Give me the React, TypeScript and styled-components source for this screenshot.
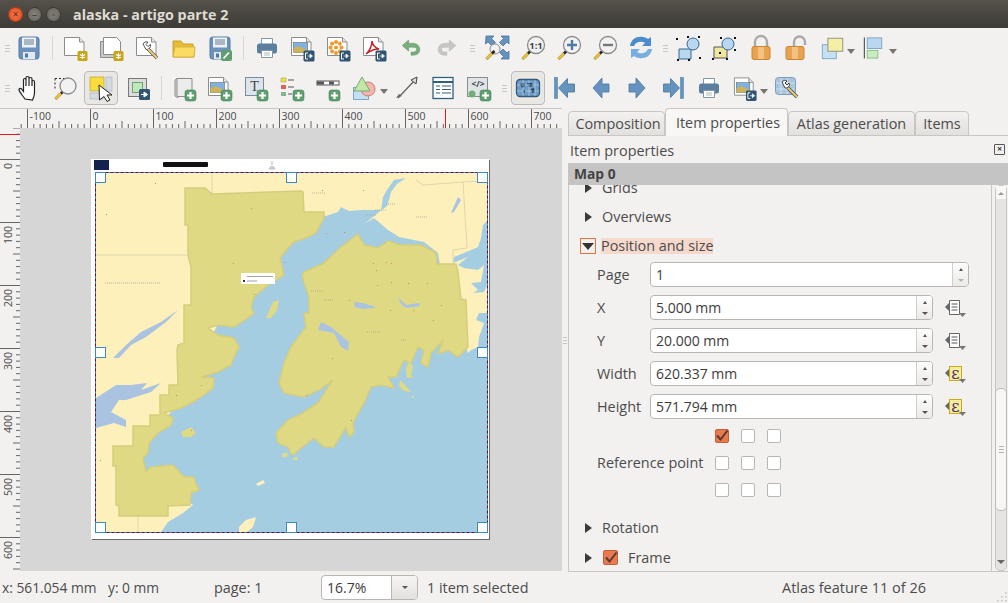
import React from 'react';
import styled, { createGlobalStyle } from 'styled-components';

const GlobalStyle = createGlobalStyle`
  html, body {
    margin: 0;
    width: 1008px;
    height: 603px;
    overflow: hidden;
    background: #f2f1f0;
    font-family: "Open Sans", "Noto Sans", sans-serif;
    font-size: 14.4px;
    color: #4c4c4c;
  }
`;

const Window = styled.div`
  display: flex;
  flex-direction: column;
  width: 1008px;
  height: 603px;
`;

const TitleBar = styled.div`
  display: flex;
  align-items: center;
  height: 28px;
  padding-left: 8px;
  background: linear-gradient(#55524b, #3d3b36);
  color: #dfdbd2;
  font-weight: 700;
  font-size: 14.300px;
`;

const WinButton = styled.div<{ $close?: boolean }>`
  width: 15px;
  height: 15px;
  margin-right: 4px;
  border-radius: 50%;
  border: 1px solid ${(p) => (p.$close ? '#b13d18' : '#3a3833')};
  box-sizing: border-box;
  background: ${(p) => (p.$close ? 'radial-gradient(#f47a4a, #e0491c)' : 'radial-gradient(#85827a, #65625b)')};
  color: ${(p) => (p.$close ? '#5c2210' : '#38362f')};
  font-size: 10px;
  line-height: 12px;
  text-align: center;
  font-weight: 400;
`;

const WinTitle = styled.div`
  margin-left: 8px;
`;

const ToolBar = styled.div`
  display: flex;
  align-items: center;
  height: 40px;
  padding-left: 3px;
`;

const Grip = styled.div<{ $w: number }>`
  width: ${(p) => p.$w}px;
  display: flex;
  flex-direction: column;
  align-items: center;
  gap: 2px;
  i {
    width: 5px;
    height: 1px;
    background: #c9c7c3;
  }
`;

const Separator = styled.div<{ $w: number }>`
  width: ${(p) => p.$w}px;
  display: flex;
  justify-content: center;
  &::after {
    content: '';
    width: 1px;
    height: 24px;
    background: #d9d7d3;
  }
`;

const ToolButton = styled.div<{ $w?: number; $active?: boolean }>`
  width: ${(p) => (p.$active ? 34 : p.$w || 36)}px;
  height: 34px;
  margin-right: ${(p) => (p.$active ? 2 : 0)}px;
  box-sizing: border-box;
  display: flex;
  align-items: center;
  justify-content: ${(p) => (p.$w ? 'flex-start' : 'center')};
  padding-left: ${(p) => (p.$w ? 4 : 0)}px;
  border-radius: 4px;
  border: 1px solid ${(p) => (p.$active ? '#bdbbb7' : 'transparent')};
  background: ${(p) => (p.$active ? '#e9e7e4' : 'transparent')};
`;

const MenuArrow = styled.span`
  width: 0;
  height: 0;
  margin: 6px 0 0 1px;
  border-left: 4px solid transparent;
  border-right: 4px solid transparent;
  border-top: 5px solid #77756f;
`;

const Main = styled.div`
  display: flex;
  height: 464px;
`;

const Workspace = styled.div`
  display: grid;
  grid-template-columns: 20px 1fr;
  grid-template-rows: 19px 1fr;
  width: 562px;
  height: 463px;
  box-sizing: border-box;
  border-top: 1px solid #c8c6c2;
  border-bottom: 1px solid #c8c6c2;
  border-right: 1px solid #c8c6c2;
`;

const RulerCorner = styled.div`
  background: #f2f1f0;
`;

const RulerSvg = styled.svg`
  display: block;
  background: #f2f1f0;
`;

const Canvas = styled.div`
  background: #d6d6d6;
  padding: 31px 0 0 71px;
  overflow: hidden;
`;

const Page = styled.div`
  position: relative;
  width: 398px;
  height: 380px;
  box-sizing: border-box;
  padding: 13px 2px 0 3.5px;
  background: #fff;
  box-shadow: 1px 1px 0 #6a6a6a;
`;

const PageHeader = styled.svg`
  position: absolute;
  left: 0;
  top: 0;
`;

const MapBox = styled.div`
  position: relative;
  width: 393px;
  height: 361px;
`;

const Handle = styled.div<{ $h: 'l' | 'm' | 'r'; $v: 't' | 'm' | 'b' }>`
  position: absolute;
  width: 11px;
  height: 11px;
  box-sizing: border-box;
  border: 1.500px solid #3f88c5;
  background: #fff;
  left: ${(p) => ({ l: '0', m: '191px', r: '382px' }[p.$h])};
  top: ${(p) => ({ t: '0', m: '175px', b: '350px' }[p.$v])};
`;

const Splitter = styled.div`
  width: 6px;
  display: flex;
  flex-direction: column;
  align-items: center;
  justify-content: center;
  gap: 2px;
  i {
    width: 4px;
    height: 1px;
    background: #c9c7c3;
  }
`;

const Panel = styled.div`
  display: flex;
  flex-direction: column;
  width: 440px;
`;

const TabRow = styled.div`
  display: flex;
  align-items: flex-end;
  height: 27px;
  border-bottom: 1px solid #c8c6c2;
`;

const Tab = styled.div<{ $active?: boolean; $w: number; $indent?: number }>`
  width: ${(p) => p.$w}px;
  height: ${(p) => (p.$active ? 28 : 25)}px;
  margin-bottom: -1px;
  padding-left: ${(p) => p.$indent || 0}px;
  box-sizing: border-box;
  border: 1px solid #c8c6c2;
  border-bottom: ${(p) => (p.$active ? 'none' : '1px solid #c8c6c2')};
  border-radius: 4px 4px 0 0;
  background: ${(p) => (p.$active ? '#f8f7f6' : 'linear-gradient(#f2f1f0, #e2e0dd)')};
  text-align: center;
  line-height: ${(p) => (p.$active ? 27 : 23)}px;
`;

const DockTitle = styled.div`
  display: flex;
  align-items: center;
  justify-content: space-between;
  height: 27px;
  box-sizing: border-box;
  padding: 2px 3px 0 2px;
`;

const DockClose = styled.div`
  width: 9px;
  height: 9px;
  margin-top: -3px;
  border: 1px solid #555;
  border-radius: 1px;
  color: #333;
  font-size: 9px;
  line-height: 8px;
  text-align: center;
  font-weight: 700;
`;

const MapBar = styled.div`
  height: 22px;
  line-height: 22px;
  padding-left: 6px;
  background: #c4c4c4;
  font-weight: 700;
  font-size: 13.800px;
  color: #444;
`;

const ScrollWrap = styled.div`
  display: flex;
  flex: 1;
  min-height: 0;
  border-left: 1px solid #c8c6c2;
  border-bottom: 1px solid #c8c6c2;
`;

const ScrollContent = styled.div`
  width: 423px;
  overflow: hidden;
  border-right: 1px solid #c8c6c2;
  padding-left: 16px;
  box-sizing: border-box;
`;

const ScrollInner = styled.div`
  margin-top: -12px;
`;

const Scrollbar = styled.div`
  position: relative;
  width: 12px;
  margin-left: 3px;
  border: 1px solid #c8c6c2;
  border-radius: 5px;
  box-sizing: border-box;
  background: #e6e4e2;
  display: flex;
  flex-direction: column;
  justify-content: space-between;
  align-items: center;
  padding: 6px 0;
`;

const ScrollCap = styled.div`
  position: absolute;
  left: 0;
  right: 0;
  top: 0;
  height: 13px;
  background: #f8f7f6;
`;

const ScrollThumb = styled.div`
  position: absolute;
  left: -1px;
  right: -1px;
  top: 202px;
  height: 123px;
  box-sizing: border-box;
  background: #f7f6f5;
  border: 1px solid #bdbbb7;
  border-radius: 5px;
  display: flex;
  align-items: center;
  justify-content: center;
  flex-direction: column;
  gap: 2px;
  i {
    width: 5px;
    height: 1px;
    background: #b5b3af;
  }
`;

const ScrollUp = styled.span`
  position: relative;
  border-left: 3px solid transparent;
  border-right: 3px solid transparent;
  border-bottom: 3px solid #999;
`;

const ScrollDown = styled.span`
  position: relative;
  border-left: 4px solid transparent;
  border-right: 4px solid transparent;
  border-top: 4px solid #666;
`;

const SectionRow = styled.div<{ $gapAbove?: number }>`
  display: flex;
  align-items: center;
  height: 29px;
  gap: 10px;
  margin-top: ${(p) => p.$gapAbove || 0}px;
`;

const Triangle = styled.span<{ $open?: boolean }>`
  width: 0;
  height: 0;
  ${(p) =>
    p.$open
      ? `border-left: 6px solid transparent; border-right: 6px solid transparent; border-top: 7px solid #333; margin: 2px 1px 0;`
      : `border-top: 5.500px solid transparent; border-bottom: 5.500px solid transparent; border-left: 7px solid #3a3a3a;`}
`;

const FocusBox = styled.span`
  width: 16px;
  height: 16px;
  margin-left: -5px;
  margin-right: -5px;
  box-sizing: border-box;
  border: 1px solid #e9703e;
  display: flex;
  align-items: center;
  justify-content: center;
`;

const HighlightText = styled.span`
  background: #f6d9cd;
  line-height: 16px;
`;

const FormRow = styled.div<{ $first?: boolean }>`
  display: flex;
  align-items: center;
  height: 33px;
  padding-left: 12px;
  margin-top: ${(p) => (p.$first ? -2 : 0)}px;
`;

const FieldLabel = styled.div`
  width: 53px;
`;

const SpinField = styled.div<{ $w: number }>`
  display: flex;
  width: ${(p) => p.$w}px;
  height: 25px;
  box-sizing: border-box;
  border: 1px solid #b8b6b2;
  border-radius: 4px;
  background: #fff;
  overflow: hidden;
`;

const FieldValue = styled.div`
  flex: 1;
  padding-left: 5px;
  line-height: 23px;
  font-size: 14px;
  color: #3c3c3c;
`;

const SpinButtons = styled.div`
  width: 15px;
  border-left: 1px solid #d0cec9;
  display: flex;
  flex-direction: column;
  align-items: center;
  justify-content: center;
  gap: 8px;
  background: linear-gradient(#fdfdfd, #eceae7);
`;

const SpinUp = styled.span`
  border-left: 2.500px solid transparent;
  border-right: 2.500px solid transparent;
  border-bottom: 3px solid #555;
`;

const SpinDown = styled.span<{ $dim?: boolean }>`
  border-left: 3px solid transparent;
  border-right: 3px solid transparent;
  border-top: 3px solid ${(p) => (p.$dim ? '#b5b3af' : '#555')};
`;

const DefinedButton = styled.svg`
  margin-left: 11px;
`;

const RefRow = styled.div<{ $first?: boolean }>`
  display: flex;
  align-items: center;
  height: 27px;
  padding-left: 12px;
  margin-top: ${(p) => (p.$first ? -1 : 0)}px;
`;

const RefLabel = styled.div`
  width: 118px;
`;

const BoxCell = styled.div`
  width: 26px;
  display: flex;
`;

const CheckBox = styled.span<{ $on?: boolean }>`
  width: 14px;
  height: 14px;
  flex: none;
  box-sizing: border-box;
  border-radius: 2px;
  border: 1px solid ${(p) => (p.$on ? '#c65f38' : '#b8b6b2')};
  background: ${(p) => (p.$on ? '#e97a4f' : '#fff')};
  display: flex;
  align-items: center;
  justify-content: center;
`;

const FrameCheck = styled(CheckBox)`
  width: 15px;
  height: 15px;
  margin-left: 1px;
`;

const StatusBar = styled.div`
  display: flex;
  align-items: center;
  height: 31px;
  padding-left: 2px;
  position: relative;
`;

const StatusCell = styled.div<{ $w: number }>`
  width: ${(p) => p.$w}px;
  white-space: nowrap;
`;

const CoordCell = styled(StatusCell)`
  font-size: 13.800px;
`;

const ZoomCombo = styled.div`
  display: flex;
  width: 97px;
  height: 25px;
  margin-right: 9px;
  box-sizing: border-box;
  border: 1px solid #b8b6b2;
  border-radius: 4px;
  background: #fff;
  overflow: hidden;
`;

const ZoomArrow = styled.div`
  width: 25px;
  border-left: 1px solid #b8b6b2;
  background: linear-gradient(#f6f5f4, #e3e1de);
  display: flex;
  align-items: center;
  justify-content: center;
`;

const AtlasStatus = styled.div`
  margin-left: auto;
  margin-right: 82px;
  font-size: 14.500px;
`;

const SizeGrip = styled.svg`
  position: absolute;
  right: 1px;
  bottom: 1px;
`;

// shared icon pieces
const Doc = () => (
  <>
    <path d="M2.500 3.500h15l4.500 4.500v13.500h-19.500z" fill="#fff" stroke="#8c8c8c" />
    <path d="M17.500 3.500v4.500h4.500" fill="#e6e6e6" stroke="#8c8c8c" />
  </>
);
const StarBadge = () => (
  <>
    <rect x="15.500" y="17" width="10" height="10" rx="1.500" fill="#c9a515" />
    <path d="M20.500 19v6M17.900 20.500l5.200 3M17.900 23.500l5.200-3" stroke="#fff" strokeWidth="1.200" />
  </>
);
const PlusBadge = () => (
  <>
    <rect x="15" y="16" width="11" height="11" rx="2.500" fill="#5f9e6e" stroke="#4a8158" strokeWidth=".6" />
    <path d="M20.500 18v7M17 21.500h7" stroke="#fff" strokeWidth="2.200" />
  </>
);
const ExportBadge = () => (
  <>
    <rect x="14.500" y="16.500" width="11" height="11" rx="1.500" fill="#2f5573" />
    <path d="M19 19h-2.500v6H19" stroke="#fff" fill="none" />
    <path d="M18.500 22h3M21 20l2.500 2-2.500 2z" stroke="#fff" fill="#fff" strokeWidth=".7" />
  </>
);
const Picture = () => (
  <>
    <rect x="4.500" y="8.500" width="14" height="10" fill="#7fb2df" stroke="#555" strokeWidth=".5" />
    <path d="M4.500 18.500v-4l5-2.500 4 2 5 2v2.500z" fill="#cdb45a" />
  </>
);
const Printer = () => (
  <>
    <path d="M8.500 4.500h11v6h-11z" fill="#fff" stroke="#7f97aa" />
    <rect x="4" y="9.500" width="20" height="10" rx="2.500" fill="#5b7f9e" />
    <path d="M8.500 16.500h11v7h-11z" fill="#fff" stroke="#7f97aa" />
    <path d="M11 19h6M11 21h6" stroke="#9aa" strokeWidth=".8" />
  </>
);
const Floppy = () => (
  <>
    <rect x="4" y="3" width="20" height="22" rx="2.500" fill="#6c92bb" stroke="#4f7aa5" />
    <rect x="7" y="3.500" width="14" height="10" fill="#eef1f5" />
    <path d="M9 6h10M9 8h10M9 10h10" stroke="#53718f" strokeWidth=".9" />
    <rect x="8" y="18" width="12" height="7" fill="#e3e9f0" />
    <rect x="10" y="19.500" width="3" height="4" fill="#4f7aa5" />
  </>
);
const MagHandle = () => (
  <>
    <path d="M3.500 25l8-8" stroke="#222" strokeWidth="2.600" />
    <path d="M3.500 25l5.500-5.500" stroke="#eac23a" strokeWidth="2.600" />
  </>
);
const Lens = ({ cx = 17, cy = 11, r = 8.500 }) => (
  <circle cx={cx} cy={cy} r={r} fill="#f2f2f2" stroke="#8c8c8c" strokeWidth="1.300" />
);
const BlueArrow = ({ d }: { d: string }) => <path d={d} fill="#6593bf" stroke="#4a739b" strokeWidth=".8" />;
const Lock = ({ open }: { open?: boolean }) => (
  <>
    <path
      d={open ? 'M11 13V8a5.500 5.500 0 0 1 11 0v3' : 'M8 13V8a6 6 0 0 1 12 0v5'}
      fill="none"
      stroke="#a9a9a9"
      strokeWidth="2.400"
    />
    <rect x={open ? 3 : 5} y="12.500" width="18" height="13" rx="2" fill="#e9a24f" stroke="#c98530" />
    <rect x={open ? 9 : 11} y="13" width="6" height="12" fill="#f2c184" />
  </>
);

const icons: Record<string, React.ReactNode> = {
  save: <Floppy />,
  newComp: (
    <>
      <Doc />
      <StarBadge />
    </>
  ),
  duplicate: (
    <>
      <path d="M2.500 7.500h17v16h-17z" fill="#c9c9c9" stroke="#8c8c8c" />
      <path d="M5.500 3.500h13l4 4v13h-17z" fill="#fff" stroke="#8c8c8c" />
      <StarBadge />
    </>
  ),
  manager: (
    <>
      <Doc />
      <path d="M9 10a4 4 0 0 1 5-2l-2 2.500 2 2 2.500-2a4 4 0 0 1-4.500 5z" fill="#fff" stroke="#555" />
      <path d="M14 15l9 9" stroke="#555" strokeWidth="3.400" />
      <path d="M14 15l9 9" stroke="#e7cf77" strokeWidth="2" />
    </>
  ),
  open: (
    <>
      <path d="M3 23V7h8l2 3h10l1 13z" fill="#e7bc35" stroke="#c9a02b" />
      <path d="M3 23l2-10h20l-1 10z" fill="#fadc63" stroke="#d8b340" />
    </>
  ),
  saveAs: (
    <>
      <Floppy />
      <rect x="15" y="16" width="11" height="11" rx="2" fill="#5f9e6e" />
      <path d="M17.500 24.500l5.500-6" stroke="#fff" strokeWidth="1.800" />
    </>
  ),
  print: <Printer />,
  exportImage: (
    <>
      <Doc />
      <Picture />
      <ExportBadge />
    </>
  ),
  exportSvg: (
    <>
      <Doc />
      {[0, 45, 90, 135, 180, 225, 270, 315].map((a) => (
        <circle key={a} cx="11" cy="8" r="2" fill="#ef9a2e" transform={`rotate(${a} 11 13.500)`} />
      ))}
      <circle cx="11" cy="13.500" r="2" fill="#ef9a2e" />
      <ExportBadge />
    </>
  ),
  exportPdf: (
    <>
      <Doc />
      <path
        d="M5 20c3-2 6-8 6-13 0 3 3 7 7 8-3 0-8 1-13 5z"
        fill="none"
        stroke="#c8232c"
        strokeWidth="1.500"
      />
      <ExportBadge />
    </>
  ),
  undo: (
    <path
      transform="translate(2.800 2.800) scale(.8)"
      d="M3 11l8-7v4h5c6 0 9 4 9 8s-3 7-8 7h-3v-4h3c3 0 4-2 4-3.500S20 13 16 13h-5v5z"
      fill="#76ad78"
      stroke="#5c955f"
      strokeWidth=".6"
    />
  ),
  redo: (
    <path
      transform="translate(2.800 2.800) scale(.8)"
      d="M25 11l-8-7v4h-5c-6 0-9 4-9 8s3 7 8 7h3v-4h-3c-3 0-4-2-4-3.500S8 13 12 13h5v5z"
      fill="#c5c5c5"
      stroke="#b0b0b0"
      strokeWidth=".6"
    />
  ),
  zoomFull: (
    <>
      <BlueArrow d="M3 2h8L8.500 4.500l4 4-3.500 3.500-4-4L2.500 10z" />
      <BlueArrow d="M26 2h-8l2.500 2.500-4 4 3.500 3.500 4-4 2 2z" />
      <BlueArrow d="M26 25h-8l2.500-2.500-4-4 3.500-3.500 4 4 2-2z" />
      <circle cx="12" cy="15" r="5" fill="#f2f2f2" stroke="#8c8c8c" />
      <MagHandle />
    </>
  ),
  zoom100: (
    <>
      <MagHandle />
      <Lens />
      <text x="17" y="14.500" fontSize="9.500" fontWeight="700" textAnchor="middle" fill="#444">
        1:1
      </text>
    </>
  ),
  zoomIn: (
    <>
      <MagHandle />
      <Lens />
      <path d="M17 6v10M12 11h10" stroke="#4f7aa5" strokeWidth="2.400" />
    </>
  ),
  zoomOut: (
    <>
      <MagHandle />
      <Lens />
      <path d="M12 11h10" stroke="#777" strokeWidth="2.400" />
    </>
  ),
  refresh: (
    <>
      <path d="M3 12C4 5 10 2 16 3c2 .3 4 1 5 2l3-2v9h-9l3-3c-3-2-9-2-11 3z" fill="#4c8ccc" />
      <path d="M25 15c-1 7-7 10-13 9-2-.3-4-1-5-2l-3 2v-9h9l-3 3c3 2 9 2 11-3z" fill="#78aee0" />
    </>
  ),
  group: (
    <>
      <path d="M4 15h12v10H4z" fill="#b9d8ef" stroke="#36658c" />
      <circle cx="18" cy="10" r="6" fill="#b9d8ef" stroke="#36658c" />
      {[[2, 5], [24, 3], [25, 24], [14, 26], [3, 26], [13, 3]].map(([x, y]) => (
        <rect key={`${x}${y}`} x={x - 1} y={y - 1} width="2" height="2" fill="#111" />
      ))}
    </>
  ),
  ungroup: (
    <>
      <path d="M3 13h13v11H3z" fill="#efe89c" stroke="#555" />
      <circle cx="17" cy="10" r="6" fill="#b9d8ef" stroke="#36658c" />
      {[[2, 25], [16, 25], [9, 19], [24, 4], [10, 4], [24, 16]].map(([x, y]) => (
        <rect key={`${x}${y}`} x={x - 1} y={y - 1} width="2" height="2" fill="#111" />
      ))}
    </>
  ),
  lock: <Lock />,
  unlock: <Lock open />,
  raise: (
    <>
      <rect x="2.500" y="10.500" width="15" height="15" fill="#c5e0f4" stroke="#7da7c5" />
      <rect x="8.500" y="3.500" width="16" height="14" fill="#f4efa4" stroke="#8f8f7a" />
    </>
  ),
  align: (
    <>
      <path d="M3.500 3v22" stroke="#555" strokeWidth="1.200" />
      <rect x="6.500" y="3.500" width="15" height="11" fill="#b9d8ef" stroke="#7da7c5" />
      <rect x="6.500" y="16.500" width="11" height="8" fill="#c8ecbd" stroke="#8fbd8a" />
    </>
  ),
  pan: (
    <path
      d="M9 25c-2-3-5-6-6-9-.5-1.500 1.500-2 2.500-1l2 2.500V6c0-2 2.500-2 2.500 0v6-8c0-2 3-2 3 0v8-7c0-2 3-2 3 0v7-4c0-2 2.500-2 2.500 0v11c0 3-1 5-2 7z"
      fill="#fff"
      stroke="#222"
      strokeWidth="1.200"
    />
  ),
  zoomTool: (
    <>
      <path d="M3 4.500h11M3 4.500v11" stroke="#222" strokeDasharray="2 2" />
      <MagHandle />
      <Lens cx="16" cy="12" r="8" />
    </>
  ),
  select: (
    <>
      <rect x="3" y="3" width="14" height="14" fill="#fadc3c" stroke="#a99a3a" strokeWidth=".6" />
      <rect x="19" y="3" width="6" height="14" fill="#d4dbe0" stroke="#a5adb3" strokeWidth=".6" />
      <rect x="3" y="19" width="13" height="6" fill="#d4dbe0" stroke="#a5adb3" strokeWidth=".6" />
      <path d="M12 11l13 10h-5l3 5-3 1.500-3-5-4.500 3.500z" fill="#fff" stroke="#222" />
    </>
  ),
  moveContent: (
    <>
      <rect x="4.500" y="4.500" width="18" height="18" fill="#dcdcdc" stroke="#777" />
      <rect x="8.500" y="8.500" width="10" height="10" fill="#bfe8bb" stroke="#6fa36f" />
      <rect x="15" y="15" width="11" height="11" rx="1.500" fill="#2f5573" />
      <path d="M17 20.500h4M20 18l3.500 2.500-3.500 2.500z" stroke="#fff" fill="#fff" />
    </>
  ),
  addMap: (
    <>
      <path d="M5 7c0-3 4-3 4-1v16c0 2-4 2-4-1z" fill="#d8d8d8" stroke="#8c8c8c" />
      <path d="M7 4.500h15v18H7z" fill="#ececec" stroke="#8c8c8c" />
      <PlusBadge />
    </>
  ),
  addImage: (
    <>
      <Doc />
      <Picture />
      <PlusBadge />
    </>
  ),
  addText: (
    <>
      <rect x="3.500" y="3.500" width="18" height="18" fill="#dde5ec" stroke="#7a8c9b" />
      <text x="12.500" y="17" fontSize="14" fontFamily="Liberation Serif, serif" textAnchor="middle" fill="#444">
        T
      </text>
      <PlusBadge />
    </>
  ),
  addLegend: (
    <>
      <rect x="3" y="4" width="5" height="4" fill="#f0dd4b" stroke="#a99a3a" strokeWidth=".5" />
      <rect x="3" y="11" width="5" height="4" fill="#d9625e" />
      <rect x="3" y="18" width="5" height="4" fill="#83b58d" />
      <path d="M10 6h6M10 13h6M10 20h4" stroke="#888" strokeWidth="1.600" />
      <PlusBadge />
    </>
  ),
  addScale: (
    <>
      <rect x="3" y="7" width="22" height="4" fill="#fff" stroke="#555" />
      <path d="M3 9h7M15 9h5" stroke="#555" strokeWidth="3" />
      <PlusBadge />
    </>
  ),
  addShape: (
    <>
      <rect x="2.500" y="13.500" width="15" height="12" fill="#c5e0f4" stroke="#7da7c5" />
      <circle cx="17" cy="15" r="7" fill="#f5b6ae" stroke="#c97b72" />
      <path d="M11 3l8 14H3z" fill="#bfe8a9" stroke="#7aa86e" />
    </>
  ),
  addArrow: (
    <>
      <path d="M5 24L22 6" stroke="#666" strokeWidth="1.300" />
      <path d="M24 3l-1 7-5-4z" fill="#ddd" stroke="#444" />
      <path d="M3 24l6-2-3-2z" fill="#666" />
    </>
  ),
  addTable: (
    <>
      <rect x="4" y="3.500" width="20" height="21" fill="#fff" stroke="#315f80" strokeWidth="1.300" />
      <path d="M4 8h20" stroke="#315f80" strokeWidth="2" />
      <path d="M7 12h4M13 12h9M7 15.500h4M13 15.500h9M7 19h4M13 19h9" stroke="#315f80" strokeWidth="1.200" />
    </>
  ),
  addHtml: (
    <>
      <rect x="2.500" y="3.500" width="20" height="19" fill="#dfe4e8" stroke="#8c8c8c" />
      <text x="13" y="13" fontSize="8.500" fontWeight="700" textAnchor="middle" fill="#444">
        {'</>'}
      </text>
      <circle cx="7" cy="20" r="3.500" fill="#6fae76" />
      <PlusBadge />
    </>
  ),
  atlasPreview: (
    <>
      <rect x="2.500" y="5.500" width="23" height="17" rx="3.500" fill="#6e9cc9" stroke="#33597a" strokeWidth="1.300" />
      <path d="M6 10l4-1 1 3-3 2zM13 9h5l1 3-4 1zM17 15l3-1 1 4-3 1zM9 16l2 0 0 3-2-1z" fill="#1f3a52" />
      <path d="M3 11h22M3 17h22M9 6v16M15 6v16M21 6v16" stroke="#d7e4ef" strokeWidth=".5" />
    </>
  ),
  first: (
    <>
      <rect x="3.500" y="3.500" width="3" height="21" fill="#6593bf" stroke="#4a739b" strokeWidth=".5" />
      <BlueArrow d="M7.500 14l9-9.500v5.500h7v8h-7v5.500z" />
    </>
  ),
  prev: <BlueArrow d="M6 14l9-10v6h7v8h-7v6z" />,
  next: <BlueArrow d="M22 14l-9-10v6H6v8h7v6z" />,
  last: (
    <>
      <rect x="21.500" y="3.500" width="3" height="21" fill="#6593bf" stroke="#4a739b" strokeWidth=".5" />
      <BlueArrow d="M20.500 14l-9-9.500v5.500h-7v8h7v5.500z" />
    </>
  ),
  atlasSettings: (
    <>
      <rect x="2.500" y="3.500" width="20" height="17" rx="3" fill="#aac6de" stroke="#7c9cb8" />
      <path d="M3 9h19M3 15h19M8 4v16M14 4v16" stroke="#e3edf5" strokeWidth=".7" />
      <path d="M9 8a3.500 3.500 0 0 1 5-1l-2 2 2 2 2-2a3.500 3.500 0 0 1-4 5z" fill="#fff" stroke="#444" />
      <path d="M15 14l9 9" stroke="#444" strokeWidth="3.400" />
      <path d="M15 14l9 9" stroke="#e7cf77" strokeWidth="2" />
    </>
  ),
};

const Icon = ({ name }: { name: string }) => (
  <svg width="28" height="28" viewBox="0 0 28 28" fontFamily="Open Sans, sans-serif">
    {icons[name]}
  </svg>
);

type ToolItem =
  | { kind: 'grip' | 'sep'; w: number }
  | { kind: 'tool'; name: string; active?: boolean; menuW?: number };

const tool = (name: string, menuW?: number, active?: boolean): ToolItem => ({ kind: 'tool', name, menuW, active });
const grip = (w: number): ToolItem => ({ kind: 'grip', w });
const sep = (w: number): ToolItem => ({ kind: 'sep', w });

const topTools: ToolItem[] = [
  grip(8),
  tool('save'),
  sep(11),
  tool('newComp'),
  tool('duplicate'),
  tool('manager'),
  tool('open'),
  tool('saveAs'),
  sep(11),
  tool('print'),
  tool('exportImage'),
  tool('exportSvg'),
  tool('exportPdf'),
  tool('undo'),
  tool('redo'),
  grip(14),
  tool('zoomFull'),
  tool('zoom100'),
  tool('zoomIn'),
  tool('zoomOut'),
  tool('refresh'),
  grip(12),
  tool('group'),
  tool('ungroup'),
  tool('lock'),
  tool('unlock'),
  tool('raise', 41),
  tool('align', 42),
];

const bottomTools: ToolItem[] = [
  grip(9),
  tool('pan'),
  tool('zoomTool'),
  tool('select', undefined, true),
  tool('moveContent'),
  sep(10),
  tool('addMap'),
  tool('addImage'),
  tool('addText'),
  tool('addLegend'),
  tool('addScale'),
  tool('addShape', 43),
  tool('addArrow'),
  tool('addTable'),
  tool('addHtml'),
  grip(14),
  tool('atlasPreview', undefined, true),
  tool('first'),
  tool('prev'),
  tool('next'),
  tool('last'),
  tool('print'),
  tool('exportImage', 42),
  tool('atlasSettings'),
];

const Tools = ({ items }: { items: ToolItem[] }) => (
  <ToolBar>
    {items.map((item, i) => {
      if (item.kind === 'grip') {
        return (
          <Grip key={i} $w={item.w}>
            <i />
            <i />
            <i />
          </Grip>
        );
      }
      if (item.kind === 'sep') return <Separator key={i} $w={item.w} />;
      return (
        <ToolButton key={i} $w={item.menuW} $active={item.active}>
          <Icon name={item.name} />
          {item.menuW && <MenuArrow />}
        </ToolButton>
      );
    })}
  </ToolBar>
);

const range = (from: number, to: number, step = 1) => {
  const out: number[] = [];
  for (let v = from; v <= to; v += step) out.push(v);
  return out;
};

// major ticks are 63px apart, ten divisions each
const HorizontalRuler = () => (
  <RulerSvg width="542" height="19" fontFamily="Open Sans, sans-serif">
    {range(-1, 85).map((n) => {
      const x = 7.5 + n * 6.3;
      const major = n % 10 === 0;
      const mid = n % 5 === 0;
      return <path key={n} d={`M${x} ${major ? 0 : mid ? 12 : 15}V19`} stroke="#666" />;
    })}
    {range(-100, 700, 100).map((v, i) => (
      <text key={v} x={9.5 + i * 63} y="10.500" fontSize="10.500" fill="#4a4a4a">
        {v}
      </text>
    ))}
    <path d="M425.500 0V19" stroke="#e01b24" />
  </RulerSvg>
);

const VerticalRuler = () => (
  <RulerSvg width="20" height="443" fontFamily="Open Sans, sans-serif">
    {range(-5, 65).map((n) => {
      const y = 31.5 + n * 6.3;
      const major = n % 10 === 0;
      const mid = n % 5 === 0;
      return <path key={n} d={`M${major ? 0 : mid ? 13 : 16} ${y}H20`} stroke="#666" />;
    })}
    {range(0, 600, 100).map((v, i) => (
      <text
        key={v}
        transform={`translate(12 ${35 + i * 63}) rotate(-90)`}
        fontSize="10.500"
        textAnchor="end"
        fill="#4a4a4a"
      >
        {v}
      </text>
    ))}
    <path d="M0 6.500H20" stroke="#e01b24" />
  </RulerSvg>
);

const pts = (coords: number[][]) => coords.map((c) => c.join(',')).join(' ');

const sea = [
  [325, 216], [337, 212], [340, 207], [348, 211], [360, 210], [380, 210], [382, 197], [386, 190], [393, 180], [405, 178],
  [396, 184], [390, 192], [388, 200], [386, 206], [378, 212], [372, 217], [363, 224], [373, 218], [387, 230], [398, 237],
  [423, 242], [437, 253], [440, 270], [467, 353], [470, 350], [477, 347], [478, 337], [483, 323], [475, 320], [478, 313],
  [487, 313], [487, 532], [160, 532], [167, 522], [182, 513], [192, 505], [180, 495], [130, 480], [130, 455], [172, 410],
  [195, 365], [230, 300], [270, 240], [300, 215],
];

const eastSound = [
  [487, 220], [482, 225], [480, 238], [477, 247], [470, 250], [453, 257], [452, 263], [467, 257], [457, 265], [463, 268],
  [477, 270], [483, 265], [480, 282], [470, 283], [477, 290], [472, 293], [483, 292], [487, 283],
];

const westOlive = [
  [184, 188], [204, 188], [211, 194], [300, 191], [302, 192], [303, 212], [323, 212], [323, 218], [315, 233], [307, 237],
  [293, 242], [287, 248], [279, 258], [283, 275], [267, 285], [253, 297], [250, 308], [253, 313], [247, 318], [233, 327],
  [217, 325], [207, 328], [217, 335], [233, 338], [238, 347], [233, 357], [230, 365], [217, 372], [200, 377], [213, 378],
  [212, 388], [200, 397], [190, 403], [180, 408], [163, 413], [172, 418], [170, 425], [157, 433], [148, 443], [147, 453],
  [142, 458], [145, 472], [150, 467], [172, 465], [183, 477], [192, 477], [198, 490], [190, 493], [189, 505], [167, 506],
  [167, 516], [118, 516], [118, 506], [115, 505], [115, 466], [112, 466], [112, 446], [132, 446], [132, 426], [149, 426],
  [149, 415], [159, 415], [159, 395], [168, 395], [168, 385], [177, 385], [176, 350], [177, 345], [183, 343], [183, 305],
  [190, 305], [190, 267], [187, 255], [187, 225], [184, 225],
];

const eastOlive = [
  [357, 234], [363, 245], [377, 248], [387, 241], [400, 245], [420, 245], [435, 253], [436, 264], [455, 264], [457, 272],
  [460, 299], [465, 300], [467, 347], [457, 357], [447, 350], [437, 354], [442, 340], [430, 353], [427, 367], [420, 363],
  [423, 350], [417, 347], [410, 363], [403, 360], [395, 377], [387, 377], [393, 388], [380, 385], [370, 387], [363, 403],
  [355, 417], [352, 423], [353, 432], [348, 437], [345, 427], [333, 447], [323, 447], [313, 438], [300, 448], [292, 455],
  [290, 453], [287, 447], [277, 443], [275, 433], [287, 420], [300, 414], [317, 403], [332, 380], [318, 390], [303, 397],
  [283, 393], [278, 383], [283, 363], [290, 347], [305, 327], [303, 313], [308, 313], [308, 297], [303, 282], [301, 275],
  [303, 272], [323, 263], [340, 247],
];

const lakes = [
  [[177, 310], [160, 322], [140, 332], [125, 345], [112, 358], [118, 358], [130, 345], [145, 337], [165, 322]],
  [[95, 398], [115, 385], [130, 385], [146, 383], [140, 390], [160, 383], [150, 392], [125, 400], [118, 400], [110, 412], [125, 420], [125, 427], [113, 423], [95, 428]],
  [[320, 322], [330, 327], [348, 342], [347, 351], [340, 347], [333, 333], [317, 330]],
  [[353, 302], [362, 303], [372, 306], [375, 308], [362, 309], [354, 307]],
  [[397, 297], [405, 305], [418, 303], [419, 306], [405, 308], [400, 304]],
  [[457, 197], [450, 213], [453, 212], [460, 200]],
];

const oliveIslands = [
  [[180, 432], [190, 427], [195, 433], [190, 437], [182, 437]],
  [[272, 302], [278, 300], [276, 310], [270, 318], [265, 318]],
  [[281, 454], [286, 452], [287, 456], [282, 458]],
  [[292, 458], [296, 457], [297, 460], [292, 460]],
  [[408, 362], [412, 366], [410, 376], [414, 377], [406, 378], [405, 368]],
  [[399, 380], [404, 385], [410, 392], [403, 391], [398, 386]],
  [[411, 396], [413, 396], [413, 398], [411, 398]],
];

const creamIslands = [
  [[255, 484], [262, 480], [264, 483], [257, 486]],
  [[238, 527], [245, 520], [255, 517], [252, 527], [246, 532], [238, 532]],
];

const borders = [
  'M211 172V194',
  'M95 255H187',
  'M137 516V532',
  'M415 180L422 185L462 182L485 181',
  'M462 182L466 248L452 250V263',
];

const reds = [
  [105, 214], [154, 183], [232, 263], [283, 262], [321, 190], [343, 232], [362, 190], [325, 233], [372, 263], [385, 262],
  [432, 320], [375, 270], [390, 282], [390, 263], [348, 300], [407, 283], [376, 285], [426, 283], [389, 310], [440, 305], [412, 310],
  [250, 208], [253, 294], [175, 395], [200, 385], [99, 460], [190, 430], [305, 395], [331, 358], [350, 420],
];

const labels = [
  [311, 193, 14], [385, 204, 10], [374, 210, 12], [364, 215, 12], [310, 291, 12], [323, 300, 10], [366, 332, 14], [415, 217, 12],
  [400, 340, 5], [104, 283, 55],
];

const MapDrawing = () => (
  <svg width="393" height="361" viewBox="94 172 393 361" style={{ display: 'block' }}>
    <rect x="94" y="172" width="393" height="361" fill="#fdf0bb" />
    <polygon points={pts(sea)} fill="#a5cde2" />
    <polygon points={pts(eastSound)} fill="#a5cde2" />
    {borders.map((d) => (
      <path key={d} d={d} fill="none" stroke="#dfd6ad" />
    ))}
    <polygon points={pts(westOlive)} fill="#e0d984" stroke="#d6cd7c" strokeWidth="1.500" />
    <polygon points={pts(eastOlive)} fill="#e0d984" stroke="#d6cd7c" strokeWidth="1.500" />
    {oliveIslands.map((p, i) => (
      <polygon key={i} points={pts(p)} fill="#e0d984" />
    ))}
    {creamIslands.map((p, i) => (
      <polygon key={i} points={pts(p)} fill="#fdf0bb" />
    ))}
    {lakes.map((p, i) => (
      <polygon key={i} points={pts(p)} fill="#a9c3e0" />
    ))}
    {reds.map(([x, y]) => (
      <rect key={`${x}-${y}`} x={x} y={y} width="1" height="1" fill="#d98b5f" />
    ))}
    {labels.map(([x, y, w]) => (
      <path key={`${x}-${y}`} d={`M${x} ${y}h${w}`} stroke="#a09d90" strokeWidth=".7" strokeDasharray="1 1" />
    ))}
    <rect x="240" y="273" width="34" height="11" fill="#fff" />
    <path d="M246 276.500h26M246 281h10" stroke="#8a8a8a" strokeWidth=".8" />
    <rect x="242" y="280" width="2" height="2" fill="#335" />
    <rect x="94.500" y="172.500" width="392" height="360" fill="none" stroke="#3f9ad0" />
    <rect x="94.500" y="172.500" width="392" height="360" fill="none" stroke="#6b0a45" strokeDasharray="3 2" />
  </svg>
);

const PageStrip = () => (
  <PageHeader width="398" height="13">
    <rect x="3" y="1" width="15" height="10" fill="#13224d" />
    <rect x="72" y="3" width="45" height="5" rx="1" fill="#111" />
    <path d="M181 2v4M178.500 10a2.500 2.500 0 1 1 5 0z" stroke="#b5b5b5" fill="#ddd" />
  </PageHeader>
);

const FileListIcon = () => (
  <DefinedButton width="23" height="24" viewBox="0 0 23 24">
    <path d="M1 11l4-4v8z" fill="#666" />
    <path d="M5.500 4.500h10v14h-10z" fill="#fff" stroke="#666" />
    <path d="M7.500 8h6M7.500 11h6M7.500 14h6" stroke="#555" />
    <path d="M15 17h7l-3.500 4z" fill="#777" />
  </DefinedButton>
);

const ExpressionIcon = () => (
  <DefinedButton width="23" height="24" viewBox="0 0 23 24">
    <path d="M1 11l4-4v8z" fill="#666" />
    <rect x="5.500" y="4.500" width="12" height="14" fill="#f5ec9c" stroke="#c9ab1e" />
    <text x="11.500" y="17" fontSize="16" textAnchor="middle" fill="#4a2d7a" fontFamily="DejaVu Serif, serif">
      ε
    </text>
    <path d="M15 17h7l-3.500 4z" fill="#777" />
  </DefinedButton>
);

const Check = () => (
  <svg width="14" height="12" viewBox="0 0 14 12" style={{ overflow: 'visible' }}>
    <path d="M2 5.500l3.500 4 7-9" fill="none" stroke="#5a3a2c" strokeWidth="2" />
  </svg>
);

const Spin = ({ dim }: { dim?: boolean }) => (
  <SpinButtons>
    <SpinUp />
    <SpinDown $dim={dim} />
  </SpinButtons>
);

const fields = [
  { label: 'X', value: '5.000 mm', icon: <FileListIcon /> },
  { label: 'Y', value: '20.000 mm', icon: <FileListIcon /> },
  { label: 'Width', value: '620.337 mm', icon: <ExpressionIcon /> },
  { label: 'Height', value: '571.794 mm', icon: <ExpressionIcon /> },
];

const handles: ['l' | 'm' | 'r', 't' | 'm' | 'b'][] = [
  ['l', 't'], ['m', 't'], ['r', 't'],
  ['l', 'm'], ['r', 'm'],
  ['l', 'b'], ['m', 'b'], ['r', 'b'],
];

const App = () => (
  <Window>
    <GlobalStyle />
    <TitleBar>
      <WinButton $close>×</WinButton>
      <WinButton>–</WinButton>
      <WinButton>▫</WinButton>
      <WinTitle>alaska - artigo parte 2</WinTitle>
    </TitleBar>
    <Tools items={topTools} />
    <Tools items={bottomTools} />
    <Main>
      <Workspace>
        <RulerCorner />
        <HorizontalRuler />
        <VerticalRuler />
        <Canvas>
          <Page>
            <PageStrip />
            <MapBox>
              <MapDrawing />
              {handles.map(([h, v]) => (
                <Handle key={h + v} $h={h} $v={v} />
              ))}
            </MapBox>
          </Page>
        </Canvas>
      </Workspace>
      <Splitter>
        <i />
        <i />
        <i />
      </Splitter>
      <Panel>
        <TabRow>
          <Tab $w={97} $indent={3}>
            Composition
          </Tab>
          <Tab $w={123} $active $indent={3}>
            Item properties
          </Tab>
          <Tab $w={127}>Atlas generation</Tab>
          <Tab $w={54}>Items</Tab>
        </TabRow>
        <DockTitle>
          Item properties
          <DockClose>×</DockClose>
        </DockTitle>
        <MapBar>Map 0</MapBar>
        <ScrollWrap>
          <ScrollContent>
            <ScrollInner>
              <SectionRow>
                <Triangle />
                Grids
              </SectionRow>
              <SectionRow>
                <Triangle />
                Overviews
              </SectionRow>
              <SectionRow>
                <FocusBox>
                  <Triangle $open />
                </FocusBox>
                <HighlightText>Position and size</HighlightText>
              </SectionRow>
              <FormRow $first>
                <FieldLabel>Page</FieldLabel>
                <SpinField $w={319}>
                  <FieldValue>1</FieldValue>
                  <Spin dim />
                </SpinField>
              </FormRow>
              {fields.map((f) => (
                <FormRow key={f.label}>
                  <FieldLabel>{f.label}</FieldLabel>
                  <SpinField $w={283}>
                    <FieldValue>{f.value}</FieldValue>
                    <Spin />
                  </SpinField>
                  {f.icon}
                </FormRow>
              ))}
              {['', 'Reference point', ''].map((label, row) => (
                <RefRow key={row} $first={row === 0}>
                  <RefLabel>{label}</RefLabel>
                  {[0, 1, 2].map((col) => (
                    <BoxCell key={col}>
                      <CheckBox $on={row === 0 && col === 0}>{row === 0 && col === 0 && <Check />}</CheckBox>
                    </BoxCell>
                  ))}
                </RefRow>
              ))}
              <SectionRow $gapAbove={10}>
                <Triangle />
                Rotation
              </SectionRow>
              <SectionRow $gapAbove={1}>
                <Triangle />
                <FrameCheck $on>
                  <Check />
                </FrameCheck>
                <span>Frame</span>
              </SectionRow>
            </ScrollInner>
          </ScrollContent>
          <Scrollbar>
            <ScrollCap />
            <ScrollUp />
            <ScrollThumb>
              <i />
              <i />
              <i />
            </ScrollThumb>
            <ScrollDown />
          </Scrollbar>
        </ScrollWrap>
      </Panel>
    </Main>
    <StatusBar>
      <CoordCell $w={106}>x: 561.054 mm</CoordCell>
      <CoordCell $w={106}>y: 0 mm</CoordCell>
      <StatusCell $w={107}>page: 1</StatusCell>
      <ZoomCombo>
        <FieldValue>16.7%</FieldValue>
        <ZoomArrow>
          <SpinDown />
        </ZoomArrow>
      </ZoomCombo>
      <StatusCell $w={110}>1 item selected</StatusCell>
      <AtlasStatus>Atlas feature 11 of 26</AtlasStatus>
      <SizeGrip width="12" height="12">
        {[[10, 2], [10, 6], [6, 6], [10, 10], [6, 10], [2, 10]].map(([x, y]) => (
          <rect key={`${x}${y}`} x={x} y={y} width="1.500" height="1.500" fill="#c4c2be" />
        ))}
      </SizeGrip>
    </StatusBar>
  </Window>
);

export default App;
